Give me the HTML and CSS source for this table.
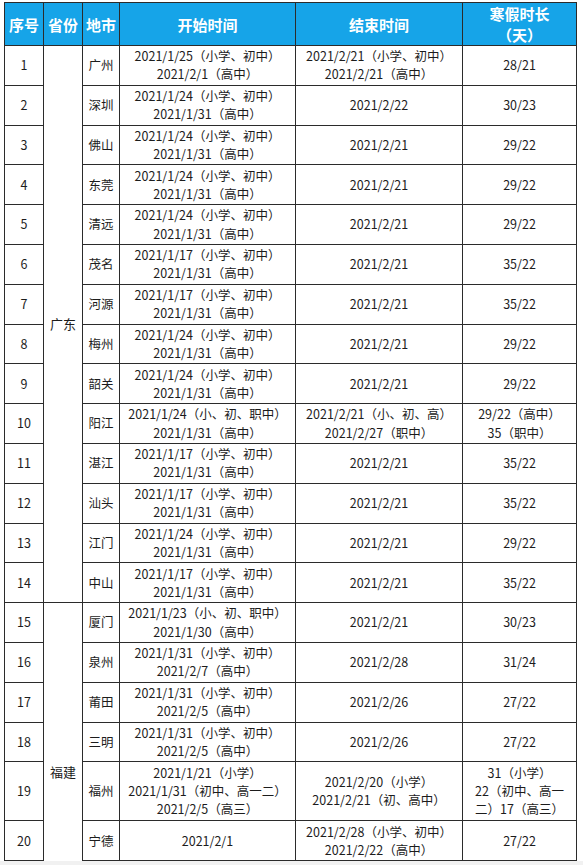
FILE: index.html
```html
<!DOCTYPE html>
<html lang="zh-CN">
<head>
<meta charset="utf-8">
<title>寒假时间表</title>
<link rel="stylesheet" href="styles.css">
</head>
<body>
<div class="sheet">
<table class="grid">
<colgroup>
<col class="c-no"><col class="c-prov"><col class="c-city"><col class="c-start"><col class="c-end"><col class="c-len">
</colgroup>
<thead>
<tr class="head"><th>序号</th><th>省份</th><th>地市</th><th>开始时间</th><th>结束时间</th><th>寒假时长<br>（天）</th></tr>
</thead>
<tbody>
<tr><td>1</td><td rowspan="14" class="prov">广东</td><td>广州</td><td>2021/1/25（小学、初中）<br>2021/2/1（高中）</td><td>2021/2/21（小学、初中）<br>2021/2/21（高中）</td><td>28/21</td></tr>
<tr><td>2</td><td>深圳</td><td>2021/1/24（小学、初中）<br>2021/1/31（高中）</td><td>2021/2/22</td><td>30/23</td></tr>
<tr><td>3</td><td>佛山</td><td>2021/1/24（小学、初中）<br>2021/1/31（高中）</td><td>2021/2/21</td><td>29/22</td></tr>
<tr><td>4</td><td>东莞</td><td>2021/1/24（小学、初中）<br>2021/1/31（高中）</td><td>2021/2/21</td><td>29/22</td></tr>
<tr><td>5</td><td>清远</td><td>2021/1/24（小学、初中）<br>2021/1/31（高中）</td><td>2021/2/21</td><td>29/22</td></tr>
<tr><td>6</td><td>茂名</td><td>2021/1/17（小学、初中）<br>2021/1/31（高中）</td><td>2021/2/21</td><td>35/22</td></tr>
<tr><td>7</td><td>河源</td><td>2021/1/17（小学、初中）<br>2021/1/31（高中）</td><td>2021/2/21</td><td>35/22</td></tr>
<tr><td>8</td><td>梅州</td><td>2021/1/24（小学、初中）<br>2021/1/31（高中）</td><td>2021/2/21</td><td>29/22</td></tr>
<tr><td>9</td><td>韶关</td><td>2021/1/24（小学、初中）<br>2021/1/31（高中）</td><td>2021/2/21</td><td>29/22</td></tr>
<tr><td>10</td><td>阳江</td><td>2021/1/24（小、初、职中）<br>2021/1/31（高中）</td><td>2021/2/21（小、初、高）<br>2021/2/27（职中）</td><td>29/22（高中）<br>35（职中）</td></tr>
<tr><td>11</td><td>湛江</td><td>2021/1/17（小学、初中）<br>2021/1/31（高中）</td><td>2021/2/21</td><td>35/22</td></tr>
<tr><td>12</td><td>汕头</td><td>2021/1/17（小学、初中）<br>2021/1/31（高中）</td><td>2021/2/21</td><td>35/22</td></tr>
<tr><td>13</td><td>江门</td><td>2021/1/24（小学、初中）<br>2021/1/31（高中）</td><td>2021/2/21</td><td>29/22</td></tr>
<tr><td>14</td><td>中山</td><td>2021/1/17（小学、初中）<br>2021/1/31（高中）</td><td>2021/2/21</td><td>35/22</td></tr>
<tr><td>15</td><td rowspan="7" class="prov">福建</td><td>厦门</td><td>2021/1/23（小、初、职中）<br>2021/1/30（高中）</td><td>2021/2/21</td><td>30/23</td></tr>
<tr><td>16</td><td>泉州</td><td>2021/1/31（小学、初中）<br>2021/2/7（高中）</td><td>2021/2/28</td><td>31/24</td></tr>
<tr><td>17</td><td>莆田</td><td>2021/1/31（小学、初中）<br>2021/2/5（高中）</td><td>2021/2/26</td><td>27/22</td></tr>
<tr><td>18</td><td>三明</td><td>2021/1/31（小学、初中）<br>2021/2/5（高中）</td><td>2021/2/26</td><td>27/22</td></tr>
<tr class="tall"><td>19</td><td>福州</td><td>2021/1/21（小学）<br>2021/1/31（初中、高一二）<br>2021/2/5（高三）</td><td>2021/2/20（小学）<br>2021/2/21（初、高中）</td><td>31（小学）<br>22（初中、高一<br>二）17（高三）</td></tr>
<tr><td>20</td><td>宁德</td><td>2021/2/1</td><td>2021/2/28（小学、初中）<br>2021/2/22（高中）</td><td>27/22</td></tr>
<tr class="rest"><td></td><td></td><td></td><td></td><td></td></tr>
</tbody>
</table>
</div>
</body>
</html>
```
FILE: styles.css
```css
html, body {
  margin: 0;
  padding: 0;
}
body {
  background: #f1f1f1;
  font-family: "Noto Sans CJK SC", "Noto Sans", sans-serif;
  color: #1c1c1c;
}
.sheet {
  background: #ffffff;
  height: 861px;
  overflow: hidden;
  padding: 2px 0 0 4px;
  box-sizing: border-box;
}
.grid {
  border-collapse: collapse;
  table-layout: fixed;
  width: 572px;
}
.c-no { width: 39px; }
.c-prov { width: 39px; }
.c-city { width: 37px; }
.c-start { width: 176px; }
.c-end { width: 167px; }
.c-len { width: 114px; }
.grid th, .grid td {
  border: 1px solid #2b2b2b;
  text-align: center;
  vertical-align: middle;
  padding: 0;
  font-size: 12.5px;
  line-height: 18.2px;
  white-space: nowrap;
  overflow: hidden;
}
.head th {
  background: #16a4e8;
  color: #ffffff;
  font-weight: bold;
  font-size: 15px;
  line-height: 21px;
  height: 40px;
}
.grid tbody tr {
  height: 39.8px;
}
.grid tbody tr.tall {
  height: 59px;
}
.grid tbody tr.rest {
  height: 80px;
}
.grid td.prov {
  font-size: 13px;
}
```
